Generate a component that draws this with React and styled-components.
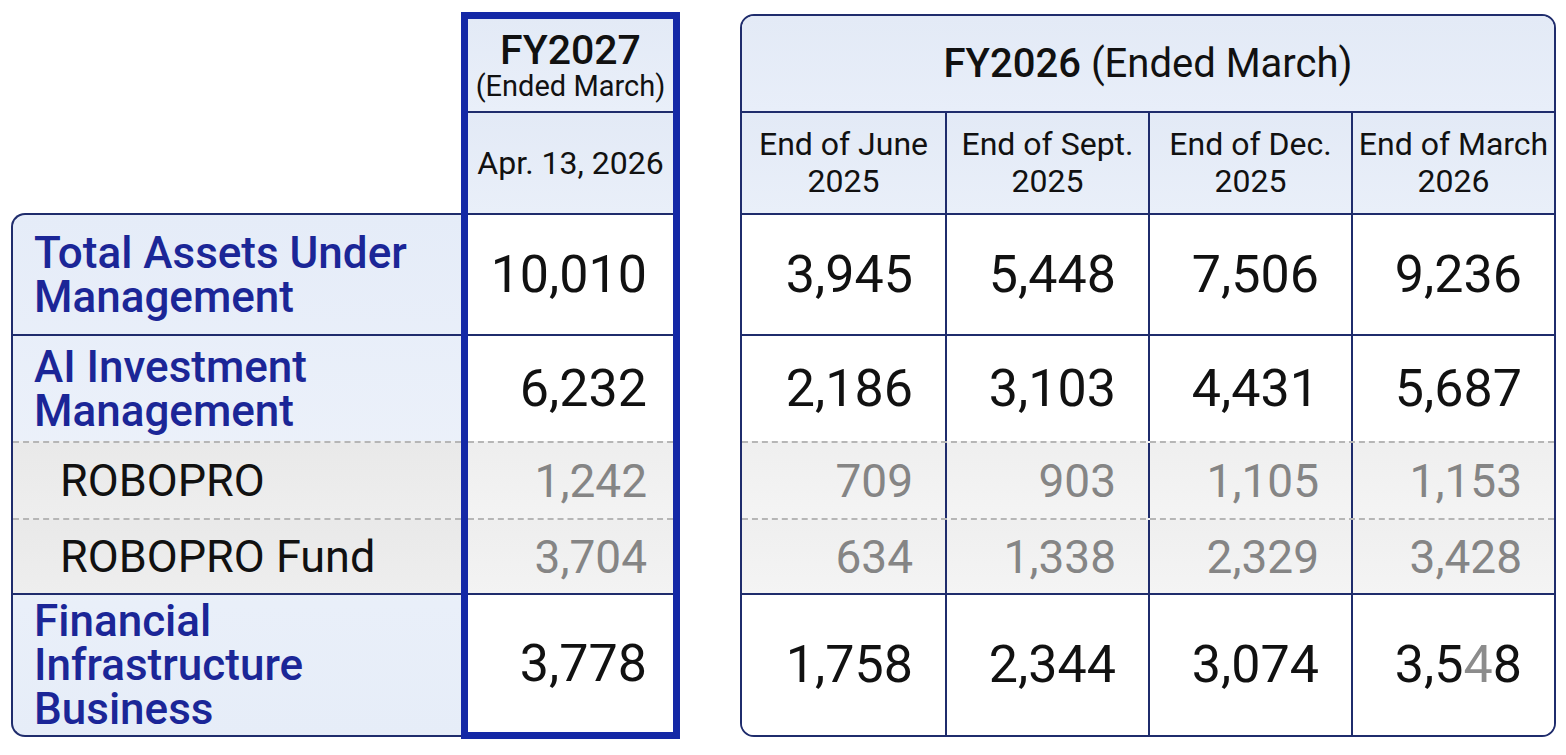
import React from 'react';
import styled, { createGlobalStyle } from 'styled-components';

const GlobalStyle = createGlobalStyle`
  html, body {
    margin: 0;
    padding: 0;
    background: #ffffff;
  }
  body {
    font-family: Roboto, "Noto Sans", "Liberation Sans", sans-serif;
    color: #111;
  }
`;

const NAVY = '#1f2c6c';
const ROYAL = '#1428a6';

const rows = [
  { label: ['Total Assets Under', 'Management'], fy27: '10,010', fy26: ['3,945', '5,448', '7,506', '9,236'], h: 119 },
  { label: ['AI Investment', 'Management'], fy27: '6,232', fy26: ['2,186', '3,103', '4,431', '5,687'], h: 105 },
  { label: ['ROBOPRO'], sub: true, fy27: '1,242', fy26: ['709', '903', '1,105', '1,153'], h: 75 },
  { label: ['ROBOPRO Fund'], sub: true, fy27: '3,704', fy26: ['634', '1,338', '2,329', '3,428'], h: 73 },
  { label: ['Financial', 'Infrastructure', 'Business'], fy27: '3,778', fy26: ['1,758', '2,344', '3,074', 'faded'], h: 140 },
];

const quarters = [
  ['End of June', '2025'],
  ['End of Sept.', '2025'],
  ['End of Dec.', '2025'],
  ['End of March', '2026'],
];

const Page = styled.div`
  display: flex;
  align-items: flex-start;
  padding: 12px 0 0 11px;
`;

const Row = styled.div`
  display: flex;
  align-items: center;
  height: ${(p) => p.$h}px;
  border-top: 2px ${(p) => (p.$sub ? 'dashed #b6b6b6' : `solid ${NAVY}`)};
`;

// label column
const LabelBlock = styled.div`
  margin-top: 201px;
  width: 450px;
  box-sizing: border-box;
  border: 2px solid ${NAVY};
  border-right: none;
  border-radius: 14px 0 0 14px;
  background: linear-gradient(180deg, #e5ecf8 0%, #ecf1fa 50%, #e6edf8 100%);
  overflow: hidden;
`;

const LabelRow = styled(Row)`
  padding-left: ${(p) => (p.$sub ? 47 : 21)}px;
  background: ${(p) => (p.$sub ? 'linear-gradient(180deg, #e9e9e9, #eeeeee)' : 'transparent')};

  &:first-child {
    border-top: none;
  }
`;

const LabelText = styled.div`
  font-size: ${(p) => (p.$sub ? 45 : 44)}px;
  line-height: ${(p) => (p.$sub ? '46px' : '44px')};
  font-weight: ${(p) => (p.$sub ? 400 : 500)};
  color: ${(p) => (p.$sub ? '#111' : '#1b2697')};
  white-space: nowrap;
`;

// FY2027 highlighted column
const FyColumn = styled.div`
  width: 219px;
  box-sizing: border-box;
  border: 7px solid ${ROYAL};
  background: #fff;
`;

const HeadCell = styled.div`
  height: ${(p) => p.$h}px;
  border-top: ${(p) => (p.$line ? `2px solid ${NAVY}` : 'none')};
  display: flex;
  flex-direction: column;
  align-items: center;
  justify-content: center;
  background: linear-gradient(180deg, #e3eaf6, #e9eff9);
  text-align: center;
`;

const YearTitle = styled.div`
  font-size: 41px;
  line-height: 42px;
  font-weight: 500;
`;

const EndedNote = styled.div`
  font-size: 29px;
  line-height: 30px;
  font-weight: 400;
  white-space: nowrap;
`;

const DateText = styled.div`
  font-size: 32px;
  line-height: 1;
  white-space: nowrap;
`;

const NumRow = styled(Row)`
  justify-content: flex-end;
  padding-right: 26px;
  background: ${(p) => (p.$sub ? 'linear-gradient(180deg, #eeeeee, #f3f3f3)' : '#fff')};
`;

const Num = styled.span`
  font-size: ${(p) => (p.$sub ? 46 : 52)}px;
  line-height: 1;
  color: ${(p) => (p.$sub ? '#858585' : '#111')};
  white-space: nowrap;
`;

const Faded = styled.span`
  color: #8c8c8c;
`;

// FY2026 block
const QuarterBlock = styled.div`
  margin: 2px 0 0 60px;
  width: 816px;
  box-sizing: border-box;
  border: 2px solid ${NAVY};
  border-radius: 14px;
  overflow: hidden;
  background: #fff;
`;

const BigHead = styled.div`
  height: 95px;
  display: flex;
  align-items: center;
  justify-content: center;
  font-size: 40px;
  background: linear-gradient(180deg, #e3eaf6, #e8eef9);
  white-space: nowrap;
`;

const Strong = styled.span`
  font-weight: 500;
`;

const Grid = styled.div`
  display: grid;
  grid-template-columns: repeat(4, 1fr);
  height: ${(p) => p.$h}px;
  border-top: 2px ${(p) => (p.$sub ? 'dashed #b6b6b6' : `solid ${NAVY}`)};
  background: ${(p) => (p.$head ? 'linear-gradient(180deg, #e3eaf6, #e9eff9)' : p.$sub ? 'linear-gradient(180deg, #efefef, #f4f4f4)' : '#fff')};
`;

const Cell = styled.div`
  display: flex;
  flex-direction: column;
  align-items: ${(p) => (p.$head ? 'center' : 'flex-end')};
  justify-content: center;
  padding-right: ${(p) => (p.$head ? 0 : 32)}px;
  text-align: center;

  & + & {
    border-left: 2px solid ${NAVY};
  }
`;

const QuarterLabel = styled.div`
  font-size: 32px;
  line-height: 37px;
  white-space: nowrap;
`;

const renderNum = (value, sub) => (
  <Num $sub={sub}>
    {value === 'faded' ? (
      <>
        3,5<Faded>4</Faded>8
      </>
    ) : (
      value
    )}
  </Num>
);

export default function App() {
  const last = rows.length - 1;

  return (
    <>
      <GlobalStyle />
      <Page>
        <LabelBlock>
          {rows.map((r, i) => (
            <LabelRow key={i} $h={r.h} $sub={r.sub}>
              <LabelText $sub={r.sub}>
                {r.label.map((line) => (
                  <div key={line}>{line}</div>
                ))}
              </LabelText>
            </LabelRow>
          ))}
        </LabelBlock>

        <FyColumn>
          <HeadCell $h={92}>
            <YearTitle>FY2027</YearTitle>
            <EndedNote>(Ended March)</EndedNote>
          </HeadCell>
          <HeadCell $h={100} $line>
            <DateText>Apr. 13, 2026</DateText>
          </HeadCell>
          {rows.map((r, i) => (
            <NumRow key={i} $h={i === last ? r.h - 3 : r.h} $sub={r.sub}>
              {renderNum(r.fy27, r.sub)}
            </NumRow>
          ))}
        </FyColumn>

        <QuarterBlock>
          <BigHead>
            <Strong>FY2026</Strong>&nbsp;(Ended March)
          </BigHead>
          <Grid $h={100} $head>
            {quarters.map((q) => (
              <Cell key={q[0]} $head>
                <QuarterLabel>{q[0]}</QuarterLabel>
                <QuarterLabel>{q[1]}</QuarterLabel>
              </Cell>
            ))}
          </Grid>
          {rows.map((r, i) => (
            <Grid key={i} $h={r.h} $sub={r.sub}>
              {r.fy26.map((v, j) => (
                <Cell key={j}>{renderNum(v, r.sub)}</Cell>
              ))}
            </Grid>
          ))}
        </QuarterBlock>
      </Page>
    </>
  );
}
